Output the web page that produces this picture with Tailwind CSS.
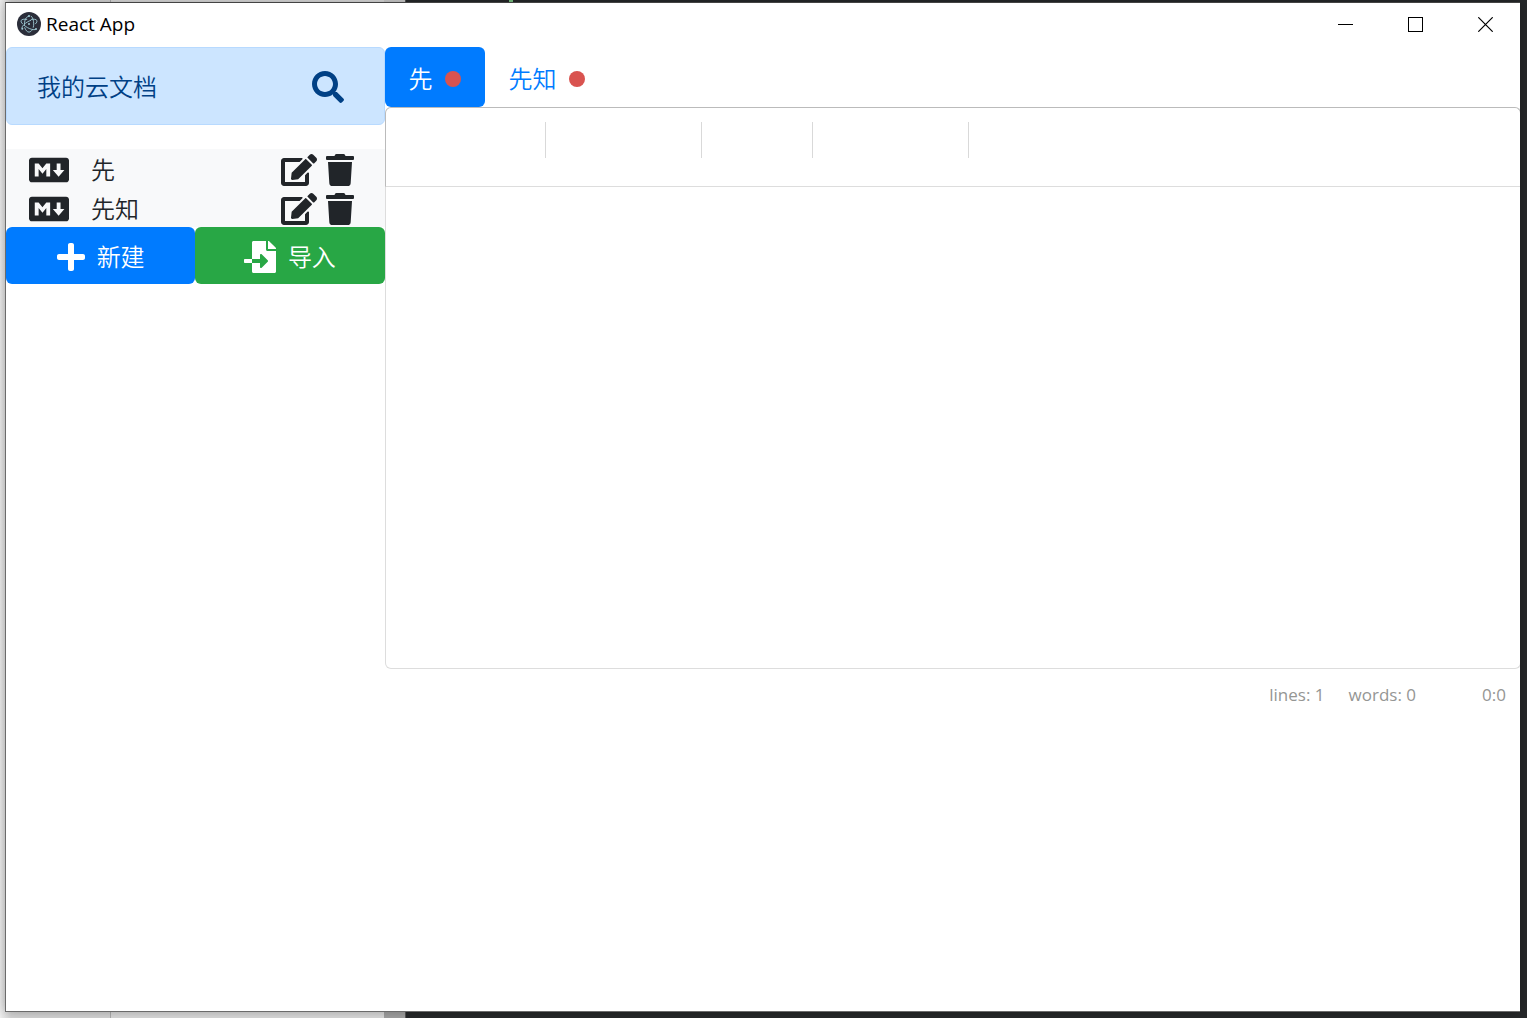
<!DOCTYPE html>
<html lang="zh-CN">
<head>
<meta charset="utf-8">
<meta name="viewport" content="width=device-width, initial-scale=1">
<title>React App</title>
<script src="https://cdn.jsdelivr.net/npm/@tailwindcss/browser@4"></script>
</head>
<body class="relative flex h-screen overflow-hidden bg-[#26282a] pt-[2px] pr-[7px] pb-[6px] pl-[5px] font-['Open_Sans','Noto_Sans_CJK_SC',sans-serif] text-2xl text-[#212529]">
<!-- desktop behind the window -->
<div class="absolute inset-0 flex" aria-hidden="true">
  <div class="w-[110px] border-r border-[#b0b0b0] bg-[#dcdcdc] bg-linear-to-r from-[#efefef] to-[#d8d8d8] to-10% box-content"></div>
  <div class="w-[273px] bg-[#dedede]"></div>
  <div class="flex w-[22px] flex-col justify-between border-r border-[#555] bg-[#a3a3a3]"><div class="h-[2px] bg-[#cfcfcf]"></div></div>
  <div class="w-[103px]"></div>
  <div class="h-[2px] w-1 bg-[#7cc583]"></div>
</div>
<svg width="0" height="0" class="absolute" aria-hidden="true">
  <symbol id="markdown" viewBox="0 0 640 512"><path d="M593.8 59.1H46.2C20.7 59.1 0 79.8 0 105.2v301.5c0 25.5 20.7 46.2 46.2 46.2h547.7c25.5 0 46.2-20.7 46.1-46.1V105.2c0-25.4-20.7-46.1-46.2-46.1zM338.5 360.6H277v-120l-61.5 76.9-61.5-76.9v120H92.3V151.4h61.5l61.5 76.9 61.5-76.9h61.5v209.2zm135.3 3.1L381.5 256H443V151.4h61.5V256H566z"/></symbol>
  <symbol id="edit" viewBox="0 0 576 512"><path d="M402.6 83.2l90.2 90.2c3.8 3.8 3.8 10 0 13.8L274.4 405.6l-92.8 10.3c-12.4 1.4-22.9-9.1-21.5-21.5l10.3-92.8L388.8 83.2c3.8-3.8 10-3.8 13.8 0zm162-22.9l-48.8-48.8c-15.2-15.2-39.9-15.2-55.2 0l-35.4 35.4c-3.8 3.8-3.8 10 0 13.8l90.2 90.2c3.8 3.8 10 3.8 13.8 0l35.4-35.4c15.2-15.3 15.2-40 0-55.2zM384 346.2V448H64V128h229.8c3.2 0 6.2-1.3 8.5-3.5l40-40c7.6-7.6 2.2-20.5-8.5-20.5H48C21.5 64 0 85.5 0 112v352c0 26.5 21.5 48 48 48h352c26.5 0 48-21.5 48-48V306.2c0-10.7-12.9-16-20.5-8.5l-40 40c-2.2 2.3-3.5 5.3-3.5 8.5z"/></symbol>
  <symbol id="trash" viewBox="0 0 448 512"><path d="M432 32H312l-9.4-18.7A24 24 0 0 0 281.1 0H166.8a23.72 23.72 0 0 0-21.4 13.3L136 32H16A16 16 0 0 0 0 48v32a16 16 0 0 0 16 16h416a16 16 0 0 0 16-16V48a16 16 0 0 0-16-16zM53.2 467a48 48 0 0 0 47.9 45h245.8a48 48 0 0 0 47.9-45L416 128H32z"/></symbol>
</svg>

<div class="relative flex min-w-0 flex-1 flex-col overflow-hidden border-y border-l border-t-[#444] border-b-[#6b6b6b] border-l-[#6b6b6b] bg-white shadow-[0_0_12px_rgba(0,0,0,0.3)]">
  <header class="flex h-11 shrink-0 items-center pb-[2px] pl-[11px] text-black">
    <svg class="size-6" viewBox="0 0 24 24" fill="none" aria-hidden="true">
      <circle cx="12" cy="12" r="12" fill="#2b2e3a"/>
      <g stroke="#a0ccd6" stroke-width="0.9" stroke-linecap="round">
        <path d="M9.8 7.4C7 6.9 4.800 7.300 4.200 8.400c-.5.9.1 2.200 1.400 3.500M7.300 13.400c.9.8 2 1.500 3.200 2.200 3 1.700 6 2.400 7.800 2"/>
        <path d="M14.200 7.400c2.800-.5 5-.1 5.600 1 .5.9 0 2.100-1.300 3.400M13.700 8.400c-1 .4-2.100.9-3.200 1.500-3.200 1.900-5.400 4.200-5.600 5.900"/>
        <path d="M7.700 15.600c.9 2.700 2.500 4.500 4.300 4.500 1.300 0 2.500-1 3.400-2.500M16.300 15.300c.3-1 .4-2.200.4-3.400 0-3.600-1-6.700-2.600-7.800M12 4.100c-1.800.2-3.500 2-4.200 4.900-.3 1.200-.4 2.300-.3 3.400"/>
      </g>
      <g fill="#a0ccd6"><circle cx="12" cy="12" r="1"/><circle cx="12" cy="4.100" r="1"/><circle cx="5.300" cy="16.800" r="1"/><circle cx="19" cy="17" r="1"/></g>
    </svg>
    <h1 class="ml-[5px] flex-1 text-[19px] leading-7">React App</h1>
    <button class="flex h-10 w-[70px] items-center justify-center" aria-label="Minimize"><svg class="h-[15px] w-[15px]" viewBox="0 0 15 15" stroke="#000" shape-rendering="crispEdges"><path d="M0 7.500h15"/></svg></button>
    <button class="flex h-10 w-[70px] items-center justify-center" aria-label="Maximize"><svg class="h-[15px] w-[15px]" viewBox="0 0 15 15" stroke="#000" fill="none" shape-rendering="crispEdges"><path d="M.5.500h14v14H.5z"/></svg></button>
    <button class="flex h-10 w-[70px] items-center justify-center" aria-label="Close"><svg class="h-[15px] w-[15px]" viewBox="0 0 15 15" stroke="#000" stroke-width="1.200"><path d="M.3.300l14.400 14.400M14.700.300L.3 14.700"/></svg></button>
  </header>

  <div class="grid flex-1 grid-cols-[1fr_3fr] items-start">
    <aside class="font-[350]">
      <div class="mb-6 flex h-[78px] items-center justify-between rounded-md border border-[#b8daff] bg-[#cce5ff] pt-[2px] pr-10 pl-[30px] text-[#004085]">
        <span>我的云文档</span>
        <button aria-label="搜索"><svg class="size-8" viewBox="0 0 512 512" fill="currentColor"><path d="M505 442.7L405.3 343c-4.5-4.5-10.6-7-17-7H372c27.6-35.3 44-79.7 44-128C416 93.1 322.9 0 208 0S0 93.1 0 208s93.1 208 208 208c48.3 0 92.7-16.4 128-44v16.300c0 6.400 2.500 12.500 7 17l99.700 99.700c9.400 9.400 24.600 9.400 33.900 0l28.300-28.300c9.400-9.400 9.400-24.600.1-34zM208 336c-70.700 0-128-57.200-128-128 0-70.700 57.200-128 128-128 70.700 0 128 57.200 128 128 0 70.700-57.200 128-128 128z"/></svg></button>
      </div>
      <ul class="bg-[#f8f9fa]">
        <li class="flex h-[39px] items-center pt-[2px] pr-[31px] pl-[23px]">
          <svg class="h-8 w-10" fill="currentColor" aria-hidden="true"><use href="#markdown"/></svg>
          <span class="ml-[22px] flex-1">先</span>
          <button aria-label="编辑"><svg class="h-8 w-9" fill="currentColor"><use href="#edit"/></svg></button>
          <button class="ml-[9px]" aria-label="删除"><svg class="h-8 w-7" fill="currentColor"><use href="#trash"/></svg></button>
        </li>
        <li class="flex h-[39px] items-center pt-[2px] pr-[31px] pl-[23px]">
          <svg class="h-8 w-10" fill="currentColor" aria-hidden="true"><use href="#markdown"/></svg>
          <span class="ml-[22px] flex-1">先知</span>
          <button aria-label="编辑"><svg class="h-8 w-9" fill="currentColor"><use href="#edit"/></svg></button>
          <button class="ml-[9px]" aria-label="删除"><svg class="h-8 w-7" fill="currentColor"><use href="#trash"/></svg></button>
        </li>
      </ul>
      <div class="grid grid-cols-2 text-white">
        <button class="flex h-[57px] items-center justify-center gap-3 rounded-md bg-[#007bff] pt-[3px]"><svg class="h-8 w-7" viewBox="0 0 448 512" fill="currentColor" aria-hidden="true"><path d="M416 208H272V64c0-17.670-14.330-32-32-32h-32c-17.670 0-32 14.330-32 32v144H32c-17.670 0-32 14.330-32 32v32c0 17.670 14.330 32 32 32h144v144c0 17.670 14.330 32 32 32h32c17.670 0 32-14.330 32-32V304h144c17.670 0 32-14.330 32-32v-32c0-17.670-14.330-32-32-32z"/></svg>新建</button>
        <button class="flex h-[57px] items-center justify-center gap-3 rounded-md bg-[#28a745] pt-[3px]"><svg class="size-8" viewBox="0 0 512 512" fill="currentColor" aria-hidden="true"><path d="M16 288c-8.800 0-16 7.200-16 16v32c0 8.800 7.200 16 16 16h112v-64zm489-183L407.100 7c-4.500-4.500-10.600-7-17-7H384v128h128v-6.100c0-6.300-2.500-12.400-7-16.900zm-153 31V0H152c-13.300 0-24 10.700-24 24v264h128v-65.200c0-14.300 17.300-21.400 27.400-11.300L379 308c6.600 6.700 6.600 17.400 0 24l-95.700 96.400c-10.100 10.100-27.400 3-27.400-11.300V352H128v136c0 13.300 10.700 24 24 24h336c13.300 0 24-10.700 24-24V160H376c-13.200 0-24-10.800-24-24z"/></svg>导入</button>
      </div>
    </aside>

    <main class="-mr-px min-w-0">
      <nav class="flex h-[60px] font-[350]">
        <a href="#" class="flex items-center gap-3 rounded-md bg-[#007bff] px-6 pt-1 text-white">先<span class="size-4 rounded-full bg-[#d9534f]"></span></a>
        <a href="#" class="flex items-center gap-3 px-6 pt-1 text-[#007bff]">先知<span class="size-4 rounded-full bg-[#d9534f]"></span></a>
      </nav>
      <div role="toolbar" class="flex h-20 items-start rounded-t-md border border-[#bbb] border-b-[#ddd] pt-[14px] pl-[14px]">
        <div class="flex"><button class="h-9 w-[45px]" aria-label="Bold"></button><button class="h-9 w-[45px]" aria-label="Italic"></button><button class="h-9 w-[45px]" aria-label="Heading"></button></div>
        <i class="mx-[10px] h-9 w-px bg-[#d9d9d9]"></i>
        <div class="flex"><button class="h-9 w-[45px]" aria-label="Quote"></button><button class="h-9 w-[45px]" aria-label="Bulleted list"></button><button class="h-9 w-[45px]" aria-label="Numbered list"></button></div>
        <i class="mx-[10px] h-9 w-px bg-[#d9d9d9]"></i>
        <div class="flex"><button class="h-9 w-[45px]" aria-label="Link"></button><button class="h-9 w-[45px]" aria-label="Image"></button></div>
        <i class="mx-[10px] h-9 w-px bg-[#d9d9d9]"></i>
        <div class="flex"><button class="h-9 w-[45px]" aria-label="Preview"></button><button class="h-9 w-[45px]" aria-label="Side by side"></button><button class="h-9 w-[45px]" aria-label="Fullscreen"></button></div>
        <i class="mx-[10px] h-9 w-px bg-[#d9d9d9]"></i>
        <button class="h-9 w-[45px]" aria-label="Guide"></button>
      </div>
      <textarea aria-label="Markdown" class="block h-[482px] w-full resize-none rounded-b-md border border-t-0 border-[#ddd] p-4 outline-none"></textarea>
      <footer class="flex justify-end pt-3 pr-[15px] text-[17px] leading-7 text-[#959694]">
        <span>lines: 1</span><span class="ml-6">words: 0</span><span class="ml-6 min-w-[66px] text-right">0:0</span>
      </footer>
    </main>
  </div>
</div>
</body>
</html>
